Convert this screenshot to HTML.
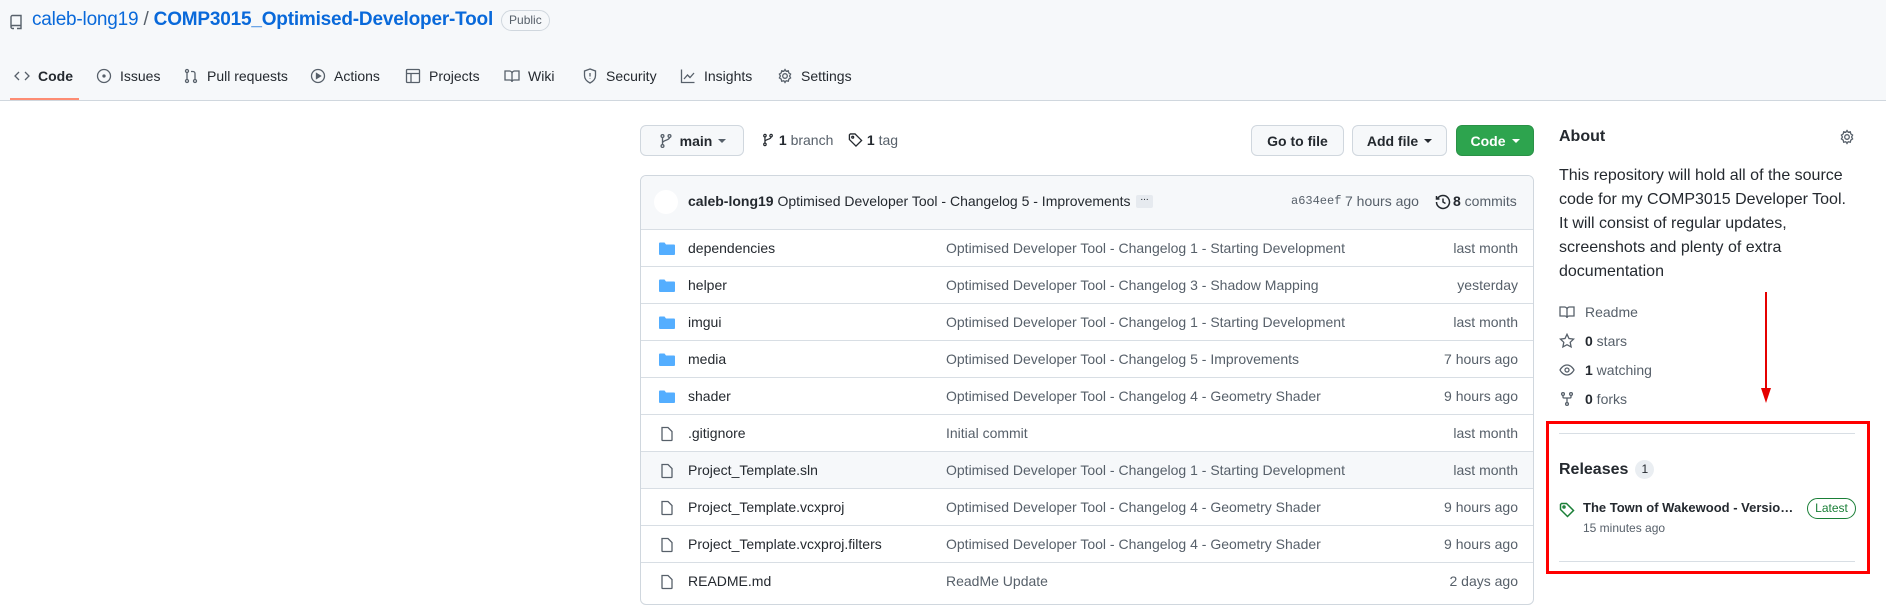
<!DOCTYPE html>
<html><head><meta charset="utf-8">
<style>
*{box-sizing:border-box;margin:0;padding:0}
body{width:1886px;height:590px;overflow:hidden;background:#fff;font-family:"Liberation Sans",sans-serif;font-size:14px;color:#24292f;position:relative}
.a{position:absolute;white-space:nowrap}
.hdr{position:absolute;left:0;top:0;width:1886px;height:101px;background:#f6f8fa;border-bottom:1px solid #d0d7de}
.nav{position:absolute;top:68px;font-size:14px;color:#24292f;display:flex;align-items:center;gap:8px}
.nav svg{width:16px;height:16px;fill:none;stroke:#57606a;stroke-width:1.3}
.btn{position:absolute;top:125px;height:31px;border:1px solid #d0d7de;border-radius:6px;background:#f6f8fa;font-weight:bold;font-size:14px;display:flex;align-items:center;justify-content:center;gap:6px}
.caret{width:0;height:0;border-left:4px solid transparent;border-right:4px solid transparent;border-top:4px solid currentColor}
.box{position:absolute;left:640px;top:175px;width:894px;height:430px;border:1px solid #d0d7de;border-radius:6px;overflow:hidden}
.row{position:absolute;left:0;width:892px;height:37px;border-top:1px solid #d8dee4}
.row span{position:absolute;top:10px;white-space:nowrap}
.row .n{left:47px}
.row .m{left:305px;color:#57606a}
.row .t{right:15px;color:#57606a}
.row svg{position:absolute;left:18px;top:11px}
.si{position:absolute;left:1559px;display:flex;align-items:center;gap:10px;color:#57606a}
.si svg{width:16px;height:16px;fill:none;stroke:#57606a;stroke-width:1.3}
.si b{color:#24292f}
</style></head><body>
<div class="hdr"></div>
<svg class="a" style="left:8px;top:14px" width="16" height="16" viewBox="0 0 16 16" fill="none" stroke="#57606a" stroke-width="1.4"><path d="M3 13V3a1.5 1.5 0 0 1 1.5-1.5H13v10H4.5A1.5 1.5 0 0 0 3 13a1.5 1.5 0 0 0 1.5 1.5H6M9 14.5h4v-3"/></svg>
<div class="a" style="left:32px;top:9px;display:flex;align-items:center;gap:8px"><span style="font-size:19px;color:#0969da;letter-spacing:-0.2px">caleb-long19 <span style="color:#57606a">/</span> <b>COMP3015_Optimised-Developer-Tool</b></span><span style="height:21px;padding:0 7px;border:1px solid #d0d7de;border-radius:12px;font-size:12px;color:#57606a;line-height:19px">Public</span></div>

<div class="nav" style="left:14px"><svg viewBox="0 0 16 16"><path d="M5 4 1 8l4 4M11 4l4 4-4 4"/></svg><b style="font-weight:600">Code</b></div>
<div class="a" style="left:10px;top:98px;width:69px;height:2px;background:#fd8c73"></div>
<div class="nav" style="left:96px"><svg viewBox="0 0 16 16"><circle cx="8" cy="8" r="6.5"/><circle cx="8" cy="8" r="1" fill="#57606a"/></svg>Issues</div>
<div class="nav" style="left:183px"><svg viewBox="0 0 16 16"><circle cx="4" cy="3" r="1.5"/><circle cx="4" cy="13" r="1.5"/><circle cx="12" cy="13" r="1.5"/><path d="M4 4.5v7M12 11.5V5.5A2 2 0 0 0 10 3.5H8"/></svg>Pull requests</div>
<div class="nav" style="left:310px"><svg viewBox="0 0 16 16"><circle cx="8" cy="8" r="6.5"/><path d="M6.5 5.5v5l4-2.5z" fill="#57606a"/></svg>Actions</div>
<div class="nav" style="left:405px"><svg viewBox="0 0 16 16"><rect x="1.5" y="1.5" width="13" height="13" rx="1"/><path d="M1.5 5.5h13M6 5.5v9"/></svg>Projects</div>
<div class="nav" style="left:504px"><svg viewBox="0 0 16 16"><path d="M1 3h4.5A2.5 2.5 0 0 1 8 5.5V14a2 2 0 0 0-2-2H1zM15 3h-4.5A2.5 2.5 0 0 0 8 5.5V14a2 2 0 0 1 2-2h5z"/></svg>Wiki</div>
<div class="nav" style="left:582px"><svg viewBox="0 0 16 16"><path d="M8 1 2.5 3v4.5c0 3.5 2.5 6 5.5 7.5 3-1.5 5.5-4 5.5-7.5V3z M8 5v3.5M8 10.5v.5"/></svg>Security</div>
<div class="nav" style="left:680px"><svg viewBox="0 0 16 16"><path d="M1.5 1.5v13h13M4 11l3.5-4 2.5 2.5L14 5"/></svg>Insights</div>
<div class="nav" style="left:777px"><svg viewBox="0 0 16 16"><circle cx="8" cy="8" r="2.3"/><path d="M8 1.5l1.2 1.8 2.1-.5.5 2.1 1.8 1.2-1 1.9 1 1.9-1.8 1.2-.5 2.1-2.1-.5L8 14.5l-1.2-1.8-2.1.5-.5-2.1-1.8-1.2 1-1.9-1-1.9 1.8-1.2.5-2.1 2.1.5z"/></svg>Settings</div>

<div class="btn" style="left:640px;width:104px;color:#24292f"><svg width="16" height="16" viewBox="0 0 16 16" fill="none" stroke="#57606a" stroke-width="1.3"><circle cx="4.5" cy="3" r="1.4"/><circle cx="4.5" cy="13" r="1.4"/><circle cx="11.5" cy="3" r="1.4"/><path d="M4.5 4.5v7M11.5 4.5c0 3-7 2.5-7 5.5"/></svg>main <span class="caret" style="color:#57606a"></span></div>
<div class="a" style="left:761px;top:132px;color:#57606a"><svg width="14" height="16" viewBox="0 0 16 16" fill="none" stroke="#24292f" stroke-width="1.4" style="vertical-align:-3px"><circle cx="4.5" cy="3" r="1.4"/><circle cx="4.5" cy="13" r="1.4"/><circle cx="11.5" cy="3" r="1.4"/><path d="M4.5 4.5v7M11.5 4.5c0 3-7 2.5-7 5.5"/></svg> <b style="color:#24292f">1</b> branch</div>
<div class="a" style="left:848px;top:132px;color:#57606a"><svg width="15" height="16" viewBox="0 0 16 16" fill="none" stroke="#24292f" stroke-width="1.4" style="vertical-align:-3px"><path d="M1.5 2.5v5l7 7 6-6-7-7h-5z"/><circle cx="5" cy="5" r="1"/></svg> <b style="color:#24292f">1</b> tag</div>
<div class="btn" style="left:1251px;width:93px">Go to file</div>
<div class="btn" style="left:1352px;width:95px">Add file <span class="caret"></span></div>
<div class="btn" style="left:1456px;width:78px;background:#2da44e;border-color:#2a9147;color:#fff">Code <span class="caret"></span></div>

<div class="box">
  <div style="position:absolute;left:0;top:0;width:894px;height:53px;background:#f6f8fa"></div>
  <div style="position:absolute;left:13px;top:14px;width:24px;height:24px;border-radius:50%;background:#fff"></div>
  <div class="a" style="left:47px;top:17px"><b>caleb-long19</b> Optimised Developer Tool - Changelog 5 - Improvements</div>
  <div class="a" style="left:495px;top:19px;width:17px;height:13px;background:#e6eaef;border-radius:2px;font-size:10px;line-height:6px;text-align:center;color:#24292f">...</div>
  <div class="a" style="left:650px;top:18px;font-family:'Liberation Mono',monospace;font-size:12px;color:#57606a">a634eef</div>
  <div class="a" style="left:704px;top:17px;color:#57606a">7 hours ago</div>
  <svg class="a" style="left:794px;top:18px" width="16" height="16" viewBox="0 0 16 16" fill="none" stroke="#24292f" stroke-width="1.5"><path d="M2.5 4.5A6.5 6.5 0 1 1 1.5 8M1.5 2v3h3M8 4.5V8l2.5 1.5"/></svg>
  <div class="a" style="left:812px;top:17px;color:#57606a"><b style="color:#24292f">8</b> commits</div>

  <div class="row" style="top:53px"><svg width="16" height="16" viewBox="0 0 16 16"><path d="M0 2.5A1 1 0 0 1 1 1.5h4.5l1.5 2h8a1 1 0 0 1 1 1V13a1 1 0 0 1-1 1H1a1 1 0 0 1-1-1z" fill="#54aeff"/></svg><span class="n">dependencies</span><span class="m">Optimised Developer Tool - Changelog 1 - Starting Development</span><span class="t">last month</span></div>
  <div class="row" style="top:90px"><svg width="16" height="16" viewBox="0 0 16 16"><path d="M0 2.5A1 1 0 0 1 1 1.5h4.5l1.5 2h8a1 1 0 0 1 1 1V13a1 1 0 0 1-1 1H1a1 1 0 0 1-1-1z" fill="#54aeff"/></svg><span class="n">helper</span><span class="m">Optimised Developer Tool - Changelog 3 - Shadow Mapping</span><span class="t">yesterday</span></div>
  <div class="row" style="top:127px"><svg width="16" height="16" viewBox="0 0 16 16"><path d="M0 2.5A1 1 0 0 1 1 1.5h4.5l1.5 2h8a1 1 0 0 1 1 1V13a1 1 0 0 1-1 1H1a1 1 0 0 1-1-1z" fill="#54aeff"/></svg><span class="n">imgui</span><span class="m">Optimised Developer Tool - Changelog 1 - Starting Development</span><span class="t">last month</span></div>
  <div class="row" style="top:164px"><svg width="16" height="16" viewBox="0 0 16 16"><path d="M0 2.5A1 1 0 0 1 1 1.5h4.5l1.5 2h8a1 1 0 0 1 1 1V13a1 1 0 0 1-1 1H1a1 1 0 0 1-1-1z" fill="#54aeff"/></svg><span class="n">media</span><span class="m">Optimised Developer Tool - Changelog 5 - Improvements</span><span class="t">7 hours ago</span></div>
  <div class="row" style="top:201px"><svg width="16" height="16" viewBox="0 0 16 16"><path d="M0 2.5A1 1 0 0 1 1 1.5h4.5l1.5 2h8a1 1 0 0 1 1 1V13a1 1 0 0 1-1 1H1a1 1 0 0 1-1-1z" fill="#54aeff"/></svg><span class="n">shader</span><span class="m">Optimised Developer Tool - Changelog 4 - Geometry Shader</span><span class="t">9 hours ago</span></div>
  <div class="row" style="top:238px"><svg width="16" height="16" viewBox="0 0 16 16" fill="none" stroke="#57606a" stroke-width="1.3"><path d="M3 1.5h6l4 4V14a.5.5 0 0 1-.5.5h-9A.5.5 0 0 1 3 14z"/></svg><span class="n">.gitignore</span><span class="m">Initial commit</span><span class="t">last month</span></div>
  <div class="row" style="top:275px;background:#f6f8fa"><svg width="16" height="16" viewBox="0 0 16 16" fill="none" stroke="#57606a" stroke-width="1.3"><path d="M3 1.5h6l4 4V14a.5.5 0 0 1-.5.5h-9A.5.5 0 0 1 3 14z"/></svg><span class="n">Project_Template.sln</span><span class="m">Optimised Developer Tool - Changelog 1 - Starting Development</span><span class="t">last month</span></div>
  <div class="row" style="top:312px"><svg width="16" height="16" viewBox="0 0 16 16" fill="none" stroke="#57606a" stroke-width="1.3"><path d="M3 1.5h6l4 4V14a.5.5 0 0 1-.5.5h-9A.5.5 0 0 1 3 14z"/></svg><span class="n">Project_Template.vcxproj</span><span class="m">Optimised Developer Tool - Changelog 4 - Geometry Shader</span><span class="t">9 hours ago</span></div>
  <div class="row" style="top:349px"><svg width="16" height="16" viewBox="0 0 16 16" fill="none" stroke="#57606a" stroke-width="1.3"><path d="M3 1.5h6l4 4V14a.5.5 0 0 1-.5.5h-9A.5.5 0 0 1 3 14z"/></svg><span class="n">Project_Template.vcxproj.filters</span><span class="m">Optimised Developer Tool - Changelog 4 - Geometry Shader</span><span class="t">9 hours ago</span></div>
  <div class="row" style="top:386px"><svg width="16" height="16" viewBox="0 0 16 16" fill="none" stroke="#57606a" stroke-width="1.3"><path d="M3 1.5h6l4 4V14a.5.5 0 0 1-.5.5h-9A.5.5 0 0 1 3 14z"/></svg><span class="n">README.md</span><span class="m">ReadMe Update</span><span class="t">2 days ago</span></div>
</div>

<div class="a" style="left:1559px;top:128px;font-size:16px;font-weight:bold">About</div>
<svg class="a" style="left:1839px;top:129px" width="16" height="16" viewBox="0 0 16 16" fill="none" stroke="#57606a" stroke-width="1.3"><circle cx="8" cy="8" r="2.3"/><path d="M8 1.5l1.2 1.8 2.1-.5.5 2.1 1.8 1.2-1 1.9 1 1.9-1.8 1.2-.5 2.1-2.1-.5L8 14.5l-1.2-1.8-2.1.5-.5-2.1-1.8-1.2 1-1.9-1-1.9 1.8-1.2.5-2.1 2.1.5z"/></svg>
<div class="a" style="left:1559px;top:164px;font-size:16px;line-height:24px;white-space:normal;width:300px">This repository will hold all of the source code for my COMP3015 Developer Tool. It will consist of regular updates, screenshots and plenty of extra documentation</div>
<div class="si" style="top:304px"><svg viewBox="0 0 16 16"><path d="M1 3h4.5A2.5 2.5 0 0 1 8 5.5V14a2 2 0 0 0-2-2H1zM15 3h-4.5A2.5 2.5 0 0 0 8 5.5V14a2 2 0 0 1 2-2h5z"/></svg>Readme</div>
<div class="si" style="top:333px"><svg viewBox="0 0 16 16"><path d="M8 1.3l2 4.2 4.6.6-3.4 3.2.9 4.6L8 11.7l-4.1 2.2.9-4.6L1.4 6.1 6 5.5z"/></svg><span><b>0</b> stars</span></div>
<div class="si" style="top:362px"><svg viewBox="0 0 16 16"><path d="M1 8s2.5-5 7-5 7 5 7 5-2.5 5-7 5-7-5-7-5z"/><circle cx="8" cy="8" r="2"/></svg><span><b>1</b> watching</span></div>
<div class="si" style="top:391px"><svg viewBox="0 0 16 16"><circle cx="4" cy="3" r="1.4"/><circle cx="12" cy="3" r="1.4"/><circle cx="8" cy="13" r="1.4"/><path d="M4 4.5V6a1 1 0 0 0 1 1h6a1 1 0 0 0 1-1V4.5M8 7v4.5"/></svg><span><b>0</b> forks</span></div>

<div class="a" style="left:1765px;top:292px;width:2px;height:100px;background:#e50000"></div>
<div class="a" style="left:1761px;top:388px;width:0;height:0;border-left:5px solid transparent;border-right:5px solid transparent;border-top:15px solid #e50000"></div>

<div class="a" style="left:1559px;top:433px;width:296px;height:1px;background:#d8dee4"></div>
<div class="a" style="left:1559px;top:460px;display:flex;align-items:center;gap:7px"><span style="font-size:16px;font-weight:bold">Releases</span><span style="width:19px;height:19px;border-radius:10px;background:#eaeef2;font-size:12px;text-align:center;line-height:19px;color:#24292f">1</span></div>
<svg class="a" style="left:1559px;top:502px" width="16" height="16" viewBox="0 0 16 16" fill="none" stroke="#1a7f37" stroke-width="1.5"><path d="M1.5 2.5v5l7 7 6-6-7-7h-5z"/><circle cx="5" cy="5" r="1"/></svg>
<div class="a" style="left:1583px;top:500px;font-weight:bold;font-size:13px;width:218px;overflow:hidden;text-overflow:ellipsis">The Town of Wakewood - Version 1.0</div>
<div class="a" style="left:1807px;top:498px;width:49px;height:21px;border:1px solid #1a7f37;border-radius:12px;color:#1a7f37;font-size:12px;text-align:center;line-height:19px">Latest</div>
<div class="a" style="left:1583px;top:521px;font-size:12px;color:#57606a">15 minutes ago</div>
<div class="a" style="left:1559px;top:561px;width:296px;height:1px;background:#d8dee4"></div>
<div class="a" style="left:1546px;top:421px;width:324px;height:153px;border:3px solid #f00"></div>
</body></html>
